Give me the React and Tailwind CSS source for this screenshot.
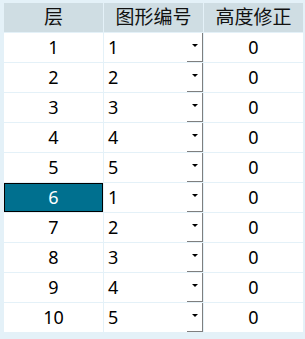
const rows = [
  { layer: 1, shape: 1 },
  { layer: 2, shape: 2 },
  { layer: 3, shape: 3 },
  { layer: 4, shape: 4 },
  { layer: 5, shape: 5 },
  { layer: 6, shape: 1, selected: true },
  { layer: 7, shape: 2 },
  { layer: 8, shape: 3 },
  { layer: 9, shape: 4 },
  { layer: 10, shape: 5 },
];

function DropCell({ value }) {
  return (
    <div className="relative flex h-[29px] items-center bg-white pl-[4px]">
      <span>{value}</span>
      {/* combo button: right + bottom shadow edge */}
      <div className="absolute right-0 bottom-0 flex h-[29px] w-[16px] items-center justify-center border-r border-b border-[#7f7f7f]">
        <svg width="6" height="4" viewBox="0 0 6 4" className="mb-[3px]">
          <path d="M0 0h6L3 3z" fill="#000" />
        </svg>
      </div>
    </div>
  );
}

export default function App() {
  return (
    <div
      className="h-[339px] w-[305px] bg-[#e4f1f8] pt-[3px] pl-[4px] text-[18px] text-black"
      style={{ fontFamily: '"Noto Sans", "Noto Sans CJK SC", sans-serif' }}
    >
      <div className="grid w-[299px] grid-cols-[99px_99px_99px] gap-x-px gap-y-px">
        <div className="flex h-[29px] items-center justify-center bg-[#cfdde3] text-[19px] text-[#111]">层</div>
        <div className="flex h-[29px] items-center justify-center bg-[#cfdde3] text-[19px] text-[#111]">图形编号</div>
        <div className="flex h-[29px] items-center justify-center bg-[#cfdde3] text-[19px] text-[#111]">高度修正</div>

        {rows.map((r) => (
          <div key={r.layer} className="contents">
            {r.selected ? (
              <div className="flex h-[29px] items-center justify-center border border-black bg-[#00708f] text-white">
                {r.layer}
              </div>
            ) : (
              <div className="flex h-[29px] items-center justify-center bg-white">{r.layer}</div>
            )}
            <DropCell value={r.shape} />
            <div className="flex h-[29px] items-center justify-center bg-white">0</div>
          </div>
        ))}
      </div>
    </div>
  );
}
